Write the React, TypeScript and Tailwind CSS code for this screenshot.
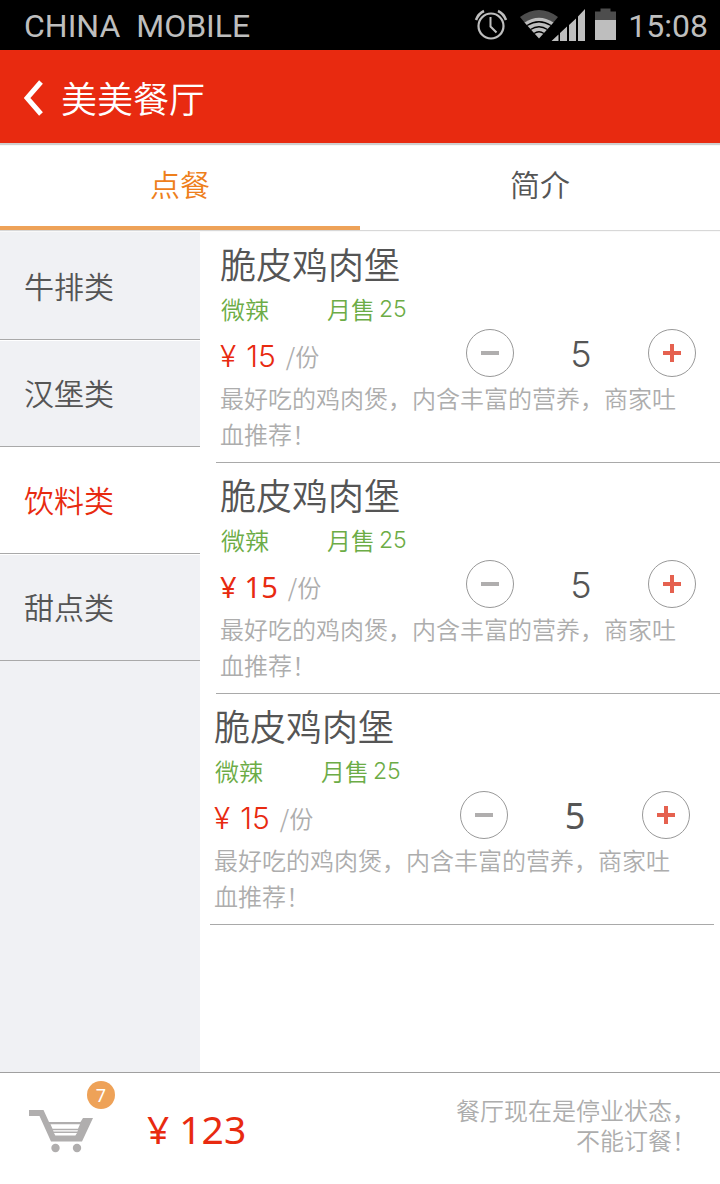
import { useState } from 'react';

type Dish = {
  id: number;
  name: string;
  taste: string;
  sold: number;
  price: number;
  unit: string;
  description: string;
  count: number;
  itemClass: string;
  priceClass: string;
  countClass: string;
};

const thinPrice = "font-['Inter'] font-light text-[30px] gap-2.5";
const solidPrice = "font-['Noto_Sans'] font-normal text-[29px] gap-2";
const thinCount = "font-['Inter'] font-light";
const solidCount = "font-['Noto_Sans'] font-normal";

const base = {
  name: '脆皮鸡肉堡',
  taste: '微辣',
  sold: 25,
  price: 15,
  unit: '份',
  description: '最好吃的鸡肉煲，内含丰富的营养，商家吐血推荐！',
  count: 5,
};

const initialDishes: Dish[] = [
  { ...base, id: 1, itemClass: 'ml-1.5', priceClass: thinPrice, countClass: thinCount },
  { ...base, id: 2, itemClass: 'ml-1.5', priceClass: solidPrice, countClass: thinCount },
  { ...base, id: 3, itemClass: 'mr-1.5', priceClass: thinPrice, countClass: solidCount },
];

const categories = ['牛排类', '汉堡类', '饮料类', '甜点类'];
const tabs = ['点餐', '简介'];

function StatusBar() {
  return (
    <div className="flex h-[50px] items-center justify-between bg-black pl-6 pr-3 pt-0.5 font-['Roboto',sans-serif] text-[32px] font-normal text-[#bebebe]">
      <span className="whitespace-pre">CHINA  MOBILE</span>
      <div className="flex items-center">
        <svg width="142" height="36" viewBox="0 0 142 36" aria-hidden="true">
          <g fill="none" stroke="#bebebe">
            <circle cx="17" cy="18" r="12.500" strokeWidth="2.200" />
            <path d="M16.500 9v9.500l6 6" strokeWidth="2" />
            <path d="M2 12q2.500-6.500 8-9M24 3q5.500 2.500 8 9" strokeWidth="2.600" />
          </g>
          <path d="M46 9q19-14 38 0l-5 6q-14-9-28 0z" fill="#4d4d4d" />
          <path d="M50.500 14.500q14.500-9.500 29 0L65 30.500z" fill="#bebebe" />
          <g fill="none" stroke="#000" strokeWidth="1.300">
            <path d="M53 17.500q12-7.500 24 0M56.500 21.500q8.500-5.500 17 0M60 25.500q5-3.500 10 0" />
          </g>
          <path d="M77.500 33l7-6.500V33zM86 25l7-6.500V33h-7zM95 17l7-6.500V33h-7zM104 8.500l7-7.500v32h-7z" fill="#bebebe" />
          <path d="M121 3.500h5.500v-3h10v3h5.500v9h-21z" fill="#4d4d4d" />
          <path d="M121 12h21v20h-21z" fill="#bebebe" />
        </svg>
        <time className="pl-3">15:08</time>
      </div>
    </div>
  );
}

function CartIcon() {
  return (
    <svg width="64" height="43" viewBox="0 0 64 43" aria-hidden="true">
      <path d="M0 0h14.500l5.500 12h31.500l2.500-4H64L53 31.500H22L10.500 6H0z" fill="#b0aeae" />
      <circle cx="26.500" cy="38" r="4.200" fill="#b0aeae" />
      <circle cx="48" cy="38" r="4.200" fill="#b0aeae" />
      <path d="M21.500 14.200h29.500l-2 4.600H23.500zM24 20.200h25l-.600 1.200H24.600zM25 23h23l-1.600 2.600H26.300z" fill="#fff" />
    </svg>
  );
}

function DishRow({ dish, onChange }: { dish: Dish; onChange: (delta: number) => void }) {
  const round =
    'flex size-12 items-center justify-center rounded-full border border-[#999] bg-white';
  return (
    <li className={`border-b border-[#a9a9a9] pb-2.5 pl-1 pr-6 pt-2.5 ${dish.itemClass}`}>
      <h2 className="text-4xl font-[350] leading-[42px] text-[#555]">{dish.name}</h2>
      <p className="mt-[7px] flex gap-[58px] pl-px text-2xl leading-9 text-[#6cac46]">
        <span>{dish.taste}</span>
        <span className="flex gap-1">
          月售<span className="font-['Inter'] text-[23px] font-light">{dish.sold}</span>
        </span>
      </p>
      <div className="mt-0.5 flex h-12 items-center justify-between">
        <p className="flex items-center gap-2.5 pt-1.5">
          <span className={`flex leading-9 text-[#e82a10] ${dish.priceClass}`}>
            <span>¥</span>
            <span>{dish.price}</span>
          </span>
          <span className="text-2xl leading-9 text-[#adadad]">/{dish.unit}</span>
        </p>
        <div className="flex w-[230px] items-center justify-between">
          <button type="button" aria-label="减少" className={round} onClick={() => onChange(-1)}>
            <svg width="18" height="18" viewBox="0 0 18 18" aria-hidden="true">
              <path d="M0 9h18" stroke="#b0aeae" strokeWidth="4" />
            </svg>
          </button>
          <output className={`pt-0.5 text-4xl leading-[48px] text-[#555] ${dish.countClass}`}>{dish.count}</output>
          <button type="button" aria-label="增加" className={round} onClick={() => onChange(1)}>
            <svg width="18" height="18" viewBox="0 0 18 18" aria-hidden="true">
              <path d="M0 9h18M9 0v18" stroke="#e5614f" strokeWidth="4" />
            </svg>
          </button>
        </div>
      </div>
      <p className="mt-[3px] text-2xl leading-9 text-[#adadad]">{dish.description}</p>
    </li>
  );
}

export default function App() {
  const [tab, setTab] = useState('点餐');
  const [category, setCategory] = useState('饮料类');
  const [dishes, setDishes] = useState(initialDishes);

  const change = (id: number, delta: number) =>
    setDishes((list) =>
      list.map((d) => (d.id === id ? { ...d, count: Math.max(0, d.count + delta) } : d)),
    );

  return (
    <div className="flex min-h-screen flex-col bg-white font-['Noto_Sans_CJK_SC',sans-serif] font-[350]">
      <StatusBar />
      <header className="relative z-10 flex h-[93px] items-center bg-[#e82a10] pl-6 text-white shadow-[0_2px_1px_#cfcfcf]">
        <a href="#back" aria-label="返回" className="pt-0.5">
          <svg width="20" height="36" viewBox="0 0 20 36" aria-hidden="true">
            <path d="M17 2L3 18l14 16" fill="none" stroke="#fff" strokeWidth="5" />
          </svg>
        </a>
        <h1 className="pl-[17px] text-4xl font-[350]">美美餐厅</h1>
      </header>
      <div role="tablist" className="flex bg-white shadow-[0_1px_1px_#d8d8d8]">
        {tabs.map((name) => (
          <button
            key={name}
            type="button"
            role="tab"
            aria-selected={tab === name}
            onClick={() => setTab(name)}
            className={`h-[87px] flex-1 border-b-4 pb-1 text-3xl ${
              tab === name ? 'border-[#eea258] text-[#ee7f1c]' : 'border-transparent text-[#555]'
            }`}
          >
            {name}
          </button>
        ))}
      </div>
      <main className="flex flex-1 pt-0.5">
        <nav className="flex w-[200px] shrink-0 flex-col bg-[#f0f1f4] pt-px">
          {categories.map((name) => (
            <button
              key={name}
              type="button"
              onClick={() => setCategory(name)}
              className={`h-[107px] border-b border-t border-b-[#a9a9a9] border-t-white pb-1 pl-6 text-left text-3xl first:border-t-transparent ${
                category === name ? 'bg-white text-[#e82a10]' : 'text-[#555]'
              }`}
            >
              {name}
            </button>
          ))}
        </nav>
        <ul className="min-w-0 flex-1 pl-2.5">
          {dishes.map((dish) => (
            <DishRow key={dish.id} dish={dish} onChange={(delta) => change(dish.id, delta)} />
          ))}
        </ul>
      </main>
      <footer className="flex h-28 items-center border-t border-[#a0a0a0] pb-1 pl-[29px] pr-6">
        <button type="button" aria-label="购物车" className="relative flex h-20 w-[86px] items-end self-start">
          <CartIcon />
          <span className="absolute right-0 top-2 flex size-7 items-center justify-center rounded-full bg-[#eea258] font-['Noto_Sans'] text-lg font-normal text-white">
            7
          </span>
        </button>
        <p className="flex gap-2.5 pl-8 pt-1 font-['Noto_Sans'] text-[39px] font-normal leading-[48px] text-[#e82a10]">
          <span>¥</span>
          <span>123</span>
        </p>
        <p className="ml-auto pb-1 text-right text-2xl leading-[30px] text-[#adadad]">
          餐厅现在是停业状态，
          <br />
          不能订餐！
        </p>
      </footer>
    </div>
  );
}
